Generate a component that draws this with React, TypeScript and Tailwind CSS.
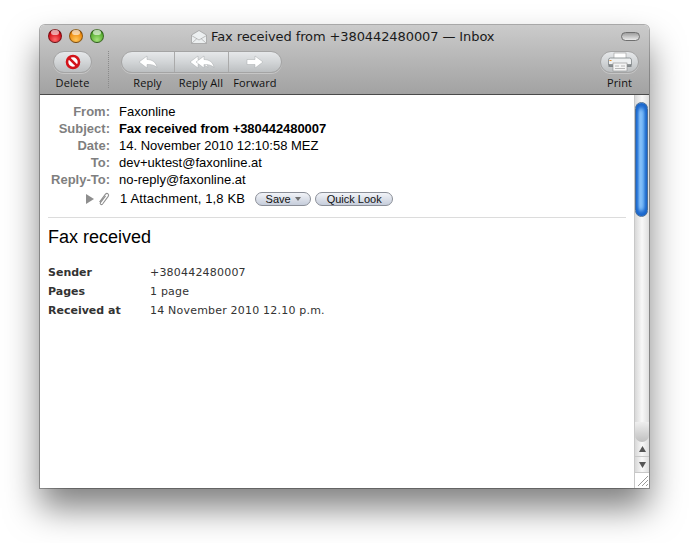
const uiFont = "font-['Open_Sans','DejaVu_Sans',sans-serif]";

function Light({ className }: { className: string }) {
  return (
    <span className={`relative block h-[14px] w-[14px] rounded-full border border-black/40 ${className}`}>
      <span className="absolute left-[2px] top-[0px] h-[5px] w-[8px] rounded-full bg-white/60" />
    </span>
  );
}

function ReplyArrow({ x = 0 }: { x?: number }) {
  return (
    <path
      transform={`translate(${x} 0)`}
      d="M1 7 L9 1 L9 4.5 C14 4.5 18 7 19 12.5 C16.5 10 13 9.3 9 9.5 L9 13 Z"
      fill="#ffffff"
      stroke="#a6aaad"
      strokeWidth="0.5"
    />
  );
}

function LabeledButton({ label, className, children }: { label: string; className: string; children: React.ReactNode }) {
  return (
    <div className={`flex flex-col items-center ${className}`}>
      <div className="flex h-[22px] w-[39px] items-center justify-center rounded-full border border-[#a4a4a4] bg-gradient-to-b from-[#e6e8ea] via-[#d2d5d7] to-[#bcbfc1] shadow-[0_1px_0_rgba(255,255,255,0.3)]">
        {children}
      </div>
      <span className="mt-[2px] text-[11px] leading-[15px] tracking-[0.1px] text-[#111]">{label}</span>
    </div>
  );
}

function Toolbar() {
  return (
    <div className={`flex h-[47px] items-start pl-[13px] pr-[10px] ${uiFont}`}>
      <LabeledButton label="Delete" className="w-[39px]">
        <svg width="16" height="16" viewBox="0 0 16 16">
          <circle cx="8" cy="8" r="6" fill="#fff" stroke="#d3131a" strokeWidth="2.6" />
          <path d="M3.8 3.8 L12.2 12.2" stroke="#d3131a" strokeWidth="2.6" />
        </svg>
      </LabeledButton>
      <div className="ml-[16px] h-[37px] border-l border-dotted border-[#8a8a8a]" />
      <div className="ml-[12px] flex w-[161px] flex-col">
        <div className="flex h-[22px] rounded-full border border-[#a4a4a4] bg-gradient-to-b from-[#e6e8ea] via-[#d2d5d7] to-[#bcbfc1] shadow-[0_1px_0_rgba(255,255,255,0.3)]">
          <div className="flex w-[53px] items-center justify-center border-r border-[#aaa]">
            <svg width="20" height="14" viewBox="0 0 20 14"><ReplyArrow /></svg>
          </div>
          <div className="flex w-[54px] items-center justify-center border-r border-[#aaa]">
            <svg width="26" height="14" viewBox="0 0 26 14">
              <ReplyArrow x={0} />
              <ReplyArrow x={6} />
            </svg>
          </div>
          <div className="flex flex-1 items-center justify-center">
            <svg width="18" height="14" viewBox="0 0 18 14">
              <path d="M1 4.5 L9 4.5 L9 1 L17 7 L9 13 L9 9.5 L1 9.5 Z" fill="#ffffff" stroke="#a6aaad" strokeWidth="0.5" />
            </svg>
          </div>
        </div>
        <div className="mt-[2px] flex text-[11px] leading-[15px] tracking-[0.1px] text-[#111]">
          <span className="w-[53px] text-center">Reply</span>
          <span className="w-[54px] whitespace-nowrap text-center">Reply All</span>
          <span className="flex-1 text-center">Forward</span>
        </div>
      </div>
      <LabeledButton label="Print" className="ml-auto w-[39px]">
        <svg width="26" height="20" viewBox="0 0 26 20">
          <rect x="7" y="1" width="12" height="6" fill="#fff" stroke="#9a9a9a" strokeWidth="0.6" />
          <rect x="1.5" y="6" width="23" height="8" rx="2" fill="#eef0f1" stroke="#7f8588" strokeWidth="0.8" />
          <rect x="1.5" y="12" width="23" height="3" fill="#6d7376" opacity="0.7" />
          <rect x="6" y="11" width="14" height="8" fill="#f4f4f4" stroke="#8d8d8d" strokeWidth="0.6" />
          <path d="M8 14 H12 M14 14 H18 M8 16.5 H18" stroke="#a8a8a8" strokeWidth="0.8" />
          <rect x="2.5" y="8" width="2" height="1" fill="#e8932e" />
        </svg>
      </LabeledButton>
    </div>
  );
}

function TitleBar() {
  return (
    <div className="relative flex h-[22px] items-center pl-[8px]">
      <div className="flex gap-[7px]">
        <Light className="bg-[radial-gradient(circle_at_50%_80%,#ff6a6a,#d4101a_60%,#8e0a10)]" />
        <Light className="bg-[radial-gradient(circle_at_50%_80%,#ffc55a,#ef8d10_60%,#a85c08)]" />
        <Light className="bg-[radial-gradient(circle_at_50%_80%,#a4e27a,#5cb035_60%,#37801d)]" />
      </div>
      <div className="ml-[87px] mt-[2px] flex items-center gap-[4px] font-['DejaVu_Sans',sans-serif] text-[13px] leading-[22px] tracking-[-0.1px] text-[#1a1a1a]">
        <svg width="16" height="14" viewBox="0 0 16 14">
          <path d="M0.5 5 L8 0.5 L15.5 5 V13.5 H0.5 Z" fill="#eceff0" stroke="#9b9b9b" strokeWidth="0.7" />
          <path d="M0.5 5.5 L8 10 L15.5 5.5 M0.5 13.5 L6 8.5 M15.5 13.5 L10 8.5" fill="none" stroke="#a8a8a8" strokeWidth="0.7" />
        </svg>
        <span className="whitespace-nowrap">Fax received from +380442480007 — Inbox</span>
      </div>
      <div className="absolute left-[581px] top-[7px] h-[9px] w-[19px] rounded-full border border-[#6f6f6f] bg-gradient-to-b from-[#9e9e9e] to-[#ececec]" />
    </div>
  );
}

function HeaderRow({ label, children }: { label: string; children: React.ReactNode }) {
  return (
    <div className="flex h-[17px] items-center">
      <span className="w-[62px] whitespace-nowrap text-right font-bold text-[#7f7f7f]">{label}</span>
      <span className="ml-[9px] whitespace-nowrap text-black">{children}</span>
    </div>
  );
}

function MessageHeaders() {
  return (
    <div className="mx-[8px] border-b border-[#dcdcdc] pb-[9px] pt-[8px] font-['Liberation_Sans',sans-serif] text-[13px]">
      <HeaderRow label="From:">Faxonline</HeaderRow>
      <HeaderRow label="Subject:"><b className="tracking-[-0.07px]">Fax received from +380442480007</b></HeaderRow>
      <HeaderRow label="Date:">14. November 2010 12:10:58 MEZ</HeaderRow>
      <HeaderRow label="To:">dev+uktest@faxonline.at</HeaderRow>
      <HeaderRow label="Reply-To:">no-reply@faxonline.at</HeaderRow>
      <div className="mt-[2px] flex h-[18px] items-center">
        <div className="flex w-[62px] items-center justify-end gap-[4px]">
          <svg width="8" height="10" viewBox="0 0 8 10"><path d="M0 0 L8 5 L0 10 Z" fill="#8e8e8e" /></svg>
          <svg width="12" height="14" viewBox="0 0 12 14">
            <path d="M1.5 10 L7.5 2.2 C9.2 0.4 11.6 2.4 10.2 4.4 L4.6 12 C3.4 13.4 1.4 12 2.6 10.4 L7.6 4" fill="none" stroke="#8f8f8f" strokeWidth="1.1" />
          </svg>
        </div>
        <span className="ml-[10px] whitespace-nowrap tracking-[0.15px] text-black">1 Attachment, 1,8 KB</span>
        <div className="ml-[10px] flex h-[14px] w-[56px] items-center justify-center gap-[4px] rounded-full border border-[#8b8f98] bg-gradient-to-b from-[#f2f4f8] to-[#c6cddb] text-[11px] leading-none text-[#111]">
          Save
          <svg width="6" height="4" viewBox="0 0 6 4"><path d="M0 0 H6 L3 4 Z" fill="#707070" /></svg>
        </div>
        <div className="ml-[4px] flex h-[14px] w-[78px] items-center justify-center rounded-full border border-[#8b8f98] bg-gradient-to-b from-[#f2f4f8] to-[#c6cddb] text-[11px] leading-none text-[#111]">
          Quick Look
        </div>
      </div>
    </div>
  );
}

function MessageBody() {
  const rows = [
    ["Sender", "+380442480007"],
    ["Pages", "1 page"],
    ["Received at", "14 November 2010 12.10 p.m."],
  ];
  return (
    <div className="px-[8px]">
      <h1 className="mt-[8px] font-['Liberation_Sans',sans-serif] text-[18px] leading-[22px] text-black">Fax received</h1>
      <div className="mt-[15px] font-['DejaVu_Sans',sans-serif] text-[11px] leading-[19px] text-[#333]">
        {rows.map(([k, v]) => (
          <div key={k} className="flex">
            <span className="w-[102px] whitespace-nowrap font-bold">{k}</span>
            <span className="whitespace-nowrap tracking-[0.2px]">{v}</span>
          </div>
        ))}
      </div>
    </div>
  );
}

function Scrollbar() {
  return (
    <div className="flex w-[15px] flex-col border-l border-[#c8c8c8] bg-gradient-to-r from-[#d8d8d8] via-[#f8f8f8] to-[#dedede]">
      <div className="h-[7px]" />
      <div className="h-[115px] w-[13px] rounded-full border border-[#4d6f96] bg-[linear-gradient(90deg,#1c6fd8,#8cc6fb_35%,#6fb3f5_65%,#1c68c8)] shadow-[inset_0_5px_4px_#1a66cc,inset_0_-5px_4px_#1a66cc]" />
      <div className="flex-1" />
      <div className="h-[20px] rounded-b-[7px] bg-gradient-to-b from-[#eeeeee] to-[#c0c0c0]" />
      <div className="flex h-[15px] items-center justify-center border-b border-[#c8c8c8]">
        <svg width="7" height="6" viewBox="0 0 7 6"><path d="M3.5 0 L7 6 H0 Z" fill="#555" /></svg>
      </div>
      <div className="flex h-[16px] items-center justify-center border-b border-[#c8c8c8]">
        <svg width="7" height="6" viewBox="0 0 7 6"><path d="M0 0 H7 L3.5 6 Z" fill="#555" /></svg>
      </div>
      <div className="flex h-[15px] items-center justify-end bg-white">
        <svg width="13" height="13" viewBox="0 0 13 13">
          <path d="M2 12 L12 2 M6 12 L12 6 M10 12 L12 10" stroke="#8f8f8f" strokeWidth="0.9" />
        </svg>
      </div>
    </div>
  );
}

export default function App() {
  return (
    <div className="h-[543px] w-[689px] overflow-hidden bg-white pl-[40px] pt-[25px]">
      <div className="flex h-[463px] w-[609px] flex-col overflow-hidden rounded-t-[5px] shadow-[0_20px_34px_rgba(0,0,0,0.5),0_0_0_1px_rgba(0,0,0,0.3)]">
        <div className="h-[70px] shrink-0 border-b border-[#4a4a4a] bg-gradient-to-b from-[#cbcbcb] to-[#a2a2a2]">
          <TitleBar />
          <div className="mt-[4px]">
            <Toolbar />
          </div>
        </div>
        <div className="flex flex-1 bg-white">
          <div className="flex-1">
            <MessageHeaders />
            <MessageBody />
          </div>
          <Scrollbar />
        </div>
      </div>
    </div>
  );
}
